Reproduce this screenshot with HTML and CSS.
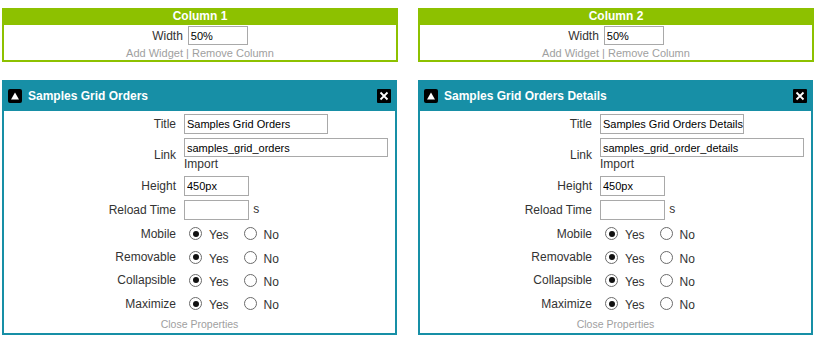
FILE: index.html
```html
<!DOCTYPE html>
<html lang="en">
<head>
  <meta charset="UTF-8">
  <title>Dashboard Layout</title>
  <link rel="stylesheet" href="styles.css">
</head>
<body>
  <div class="board">

    <div class="column">
      <div class="col-box">
        <div class="col-head">Column 1</div>
        <div class="col-body">
          <div class="col-width"><span>Width</span><input type="text" class="field field-sm" value="50%"></div>
          <div class="col-links"><a>Add Widget</a> | <a>Remove Column</a></div>
        </div>
      </div>

      <div class="widget">
        <div class="widget-head">
          <svg class="head-icon" viewBox="0 0 14 14"><rect width="14" height="14" rx="2" fill="#000"/><path d="M3 10.5 L7 3.5 L11 10.5 Z" fill="#fff"/></svg>
          <span class="widget-title">Samples Grid Orders</span>
          <svg class="head-icon" viewBox="0 0 14 14"><rect width="14" height="14" rx="1" fill="#000"/><path d="M3.5 3.5 L10.5 10.5 M10.5 3.5 L3.5 10.5" stroke="#fff" stroke-width="1.8"/></svg>
        </div>
        <div class="widget-body">
          <div class="props">
            <label>Title</label>
            <div><input type="text" class="field field-title" value="Samples Grid Orders"></div>
            <label>Link</label>
            <div><input type="text" class="field field-link" value="samples_grid_orders"><div class="import">Import</div></div>
            <label>Height</label>
            <div><input type="text" class="field field-sm" value="450px"></div>
            <label>Reload Time</label>
            <div><input type="text" class="field field-sm" value=""> <span class="unit">s</span></div>
            <label>Mobile</label>
            <div class="choice"><input type="radio" name="m1" checked><span>Yes</span><input type="radio" name="m1"><span>No</span></div>
            <label>Removable</label>
            <div class="choice"><input type="radio" name="r1" checked><span>Yes</span><input type="radio" name="r1"><span>No</span></div>
            <label>Collapsible</label>
            <div class="choice"><input type="radio" name="c1" checked><span>Yes</span><input type="radio" name="c1"><span>No</span></div>
            <label>Maximize</label>
            <div class="choice"><input type="radio" name="x1" checked><span>Yes</span><input type="radio" name="x1"><span>No</span></div>
          </div>
          <div class="close-props"><a>Close Properties</a></div>
        </div>
      </div>
    </div>

    <div class="column">
      <div class="col-box">
        <div class="col-head">Column 2</div>
        <div class="col-body">
          <div class="col-width"><span>Width</span><input type="text" class="field field-sm" value="50%"></div>
          <div class="col-links"><a>Add Widget</a> | <a>Remove Column</a></div>
        </div>
      </div>

      <div class="widget">
        <div class="widget-head">
          <svg class="head-icon" viewBox="0 0 14 14"><rect width="14" height="14" rx="2" fill="#000"/><path d="M3 10.5 L7 3.5 L11 10.5 Z" fill="#fff"/></svg>
          <span class="widget-title">Samples Grid Orders Details</span>
          <svg class="head-icon" viewBox="0 0 14 14"><rect width="14" height="14" rx="1" fill="#000"/><path d="M3.5 3.5 L10.5 10.5 M10.5 3.5 L3.5 10.5" stroke="#fff" stroke-width="1.8"/></svg>
        </div>
        <div class="widget-body">
          <div class="props">
            <label>Title</label>
            <div><input type="text" class="field field-title" value="Samples Grid Orders Details"></div>
            <label>Link</label>
            <div><input type="text" class="field field-link" value="samples_grid_order_details"><div class="import">Import</div></div>
            <label>Height</label>
            <div><input type="text" class="field field-sm" value="450px"></div>
            <label>Reload Time</label>
            <div><input type="text" class="field field-sm" value=""> <span class="unit">s</span></div>
            <label>Mobile</label>
            <div class="choice"><input type="radio" name="m2" checked><span>Yes</span><input type="radio" name="m2"><span>No</span></div>
            <label>Removable</label>
            <div class="choice"><input type="radio" name="r2" checked><span>Yes</span><input type="radio" name="r2"><span>No</span></div>
            <label>Collapsible</label>
            <div class="choice"><input type="radio" name="c2" checked><span>Yes</span><input type="radio" name="c2"><span>No</span></div>
            <label>Maximize</label>
            <div class="choice"><input type="radio" name="x2" checked><span>Yes</span><input type="radio" name="x2"><span>No</span></div>
          </div>
          <div class="close-props"><a>Close Properties</a></div>
        </div>
      </div>
    </div>

  </div>
</body>
</html>
```

FILE: styles.css
```css
:root {
  --green: #8dc100;
  --teal: #178fa6;
  --text: #333333;
  --muted: #a0a0a0;
  --field-border: #a9a9a9;
}
* {
  box-sizing: border-box;
}
body {
  margin: 0;
  font-family: "Liberation Sans", Arial, sans-serif;
  font-size: 12px;
  color: var(--text);
  background: #fff;
}
.board {
  display: flex;
  gap: 20px;
  padding: 8px 0 0 2px;
}
.column {
  width: 396px;
  display: flex;
  flex-direction: column;
  gap: 18px;
}

/* column box */
.col-head {
  background: var(--green);
  color: #fff;
  font-weight: bold;
  text-align: center;
  height: 17px;
  line-height: 17px;
}
.col-body {
  border: 2px solid var(--green);
  border-top: none;
  padding-top: 1px;
  text-align: center;
}
.col-width {
  display: flex;
  justify-content: center;
  align-items: center;
  gap: 5px;
  height: 19px;
}
.col-width .field {
  width: 60px;
  height: 19px;
}
.col-links {
  font-size: 11px;
  color: var(--muted);
  line-height: 13px;
  padding-top: 2px;
}

/* widget */
.widget {
  width: 395px;
}
.widget-head {
  background: var(--teal);
  height: 31px;
  display: flex;
  align-items: center;
  padding: 0 6px;
  gap: 6px;
}
.head-icon {
  width: 14px;
  height: 14px;
  flex: none;
}
.widget-title {
  flex: 1;
  color: #fff;
  font-weight: bold;
  font-size: 12px;
}
.widget-body {
  border: 2px solid var(--teal);
  border-top: none;
  padding-top: 3px;
}
.props {
  display: grid;
  grid-template-columns: 172px 1fr;
  column-gap: 8px;
  row-gap: 4px;
  align-items: center;
}
.props label {
  text-align: right;
}
.field {
  font-family: "Liberation Sans", Arial, sans-serif;
  font-size: 11px;
  color: #000;
  border: 1px solid var(--field-border);
  padding: 0 2px;
  height: 20px;
  margin: 0;
  vertical-align: middle;
  outline: none;
}
.field-title {
  width: 144px;
  padding-right: 0;
}
.field-link {
  width: 204px;
  height: 19px;
}
.field-sm {
  width: 65px;
}
.import {
  line-height: 15px;
}
.unit {
  margin-left: 1px;
}
.choice {
  display: flex;
  align-items: center;
  height: 19.4px;
}
.choice span {
  padding-top: 3px;
}
.choice input {
  appearance: none;
  width: 13px;
  height: 13px;
  margin: 0 7px 0 5px;
  border: 1px solid #6b6b6b;
  border-radius: 50%;
  background: #fff;
  position: relative;
}
.choice span + input {
  margin-left: 15px;
}
.choice input:checked::after {
  content: "";
  position: absolute;
  left: 2.5px;
  top: 2.5px;
  width: 6px;
  height: 6px;
  border-radius: 50%;
  background: #111;
}
.close-props {
  text-align: center;
  font-size: 10.5px;
  color: var(--muted);
  line-height: 13px;
  padding: 4px 0 2px;
}
```
